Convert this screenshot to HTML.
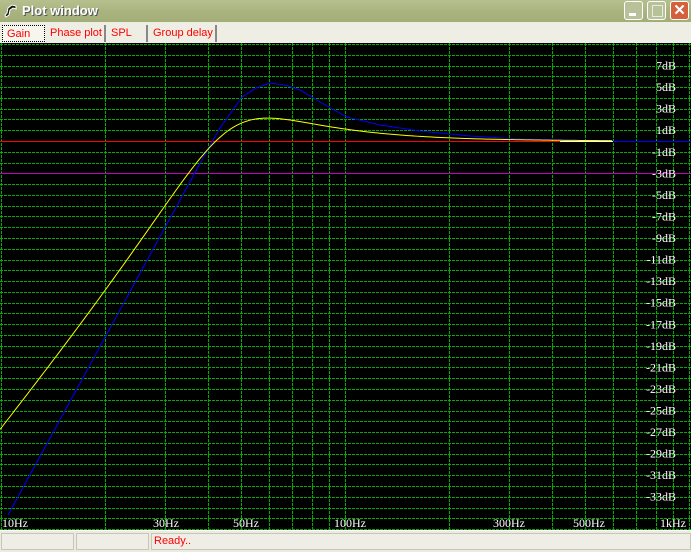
<!DOCTYPE html>
<html><head><meta charset="utf-8"><style>
body{margin:0;width:691px;height:551px;overflow:hidden;background:#ecebe0;font-family:"Liberation Sans",sans-serif;position:relative}
#title{position:absolute;left:0;top:0;width:691px;height:22px;background:linear-gradient(#b6c08e,#a9b47f 50%,#a2ad78)}
#title span{position:absolute;left:22px;top:3px;color:#fff;font-weight:bold;font-size:13px;text-shadow:1px 1px 0 #555}
.btn{position:absolute;top:1px;width:19px;height:19px;border:1px solid #fff;border-radius:3px;box-sizing:border-box}
#tabs{position:absolute;top:22px;left:0;width:691px;height:21px;background:#efeee4}
.tab{position:absolute;top:3px;height:17px;color:#f00;font-size:11px;line-height:16px;padding-left:4px;border-right:2px solid #888;box-sizing:border-box}
#plot{position:absolute;top:43px;left:0}
#status{position:absolute;top:530px;left:0;width:691px;height:21px;background:#ecebe0;border-top:1px solid #fff}
.sp{position:absolute;top:2px;height:17px;border:1px solid #c8c6b8;box-sizing:border-box;background:#efeee6}
</style></head><body>
<div id="title"><svg width="16" height="16" style="position:absolute;left:3px;top:3px" viewBox="0 0 16 16"><path d="M3 14 L6 12 L7 7 L10 5 L13 6 L13 3 L9 2 L5 5 L4 10 L2 12Z" fill="#111" stroke="#fff" stroke-width="1"/></svg><span>Plot window</span>
<div class="btn" style="left:624px;background:#b8c29a"><div style="position:absolute;left:4px;top:11px;width:7px;height:3px;background:#fff"></div></div>
<div class="btn" style="left:647px;background:#b8c29a"><div style="position:absolute;left:4px;top:3px;width:9px;height:10px;border:1px solid #e8ecd8"></div></div>
<div class="btn" style="left:670px;background:#d4603c;color:#fff;font-size:15px;font-weight:bold;text-align:center;line-height:17px">✕</div>
</div>
<div id="tabs">
<div class="tab" style="left:2px;width:43px;border:1px dotted #000;background:#f6f5ee">Gain</div>
<div class="tab" style="left:46px;width:60px">Phase plot</div>
<div class="tab" style="left:107px;width:41px">SPL</div>
<div class="tab" style="left:149px;width:68px">Group delay</div>
</div>
<svg id="plot" width="691" height="487" viewBox="0 43 691 487" xmlns="http://www.w3.org/2000/svg"><rect x="0" y="43" width="691" height="487" fill="#000"/><g id="g"></g></svg>
<div id="status"><div class="sp" style="left:1px;width:73px"></div><div class="sp" style="left:76px;width:73px"></div><div class="sp" style="left:151px;width:540px;color:#f00;font-size:11px;line-height:15px;padding-left:2px">Ready..</div></div>
<script>
var NS='http://www.w3.org/2000/svg',g=document.getElementById('g');
function el(n,a,t){var e=document.createElementNS(NS,n);for(var k in a)e.setAttribute(k,a[k]);if(t)e.textContent=t;g.appendChild(e);}
function X(f){return 1+344*Math.log10(f/10);}
function Y(d){return 141-10.78*d;}
var fs=[];for(var d=10;d<=1000;d*=10)for(var k=1;k<10;k++){var f=d*k;if(f<=1000)fs.push(f);}
fs.forEach(function(f){var x=Math.round(X(f))+0.5;el('line',{x1:x,y1:43,x2:x,y2:530,stroke:'#00b000','stroke-dasharray':'3,1','shape-rendering':'crispEdges'});});
for(var db=9;db>=-36;db--){if(db==0||db==-3)continue;var y=Math.round(Y(db))+0.5;el('line',{x1:0,y1:y,x2:691,y2:y,stroke:'#00b000','stroke-dasharray':'3,1','shape-rendering':'crispEdges'});}
el('line',{x1:0,y1:173.5,x2:691,y2:173.5,stroke:'#c000c0','shape-rendering':'crispEdges'});
el('line',{x1:0,y1:141.5,x2:613,y2:141.5,stroke:'#ff0000','shape-rendering':'crispEdges'});
el('line',{x1:613,y1:141.5,x2:691,y2:141.5,stroke:'#0000ff','shape-rendering':'crispEdges'});
for(var db=7;db>=-33;db-=2){el('text',{x:676,y:Y(db)+4,'text-anchor':'end',fill:'#fff','font-family':'Liberation Serif','font-size':12},db+'dB');}
[['10Hz',2],['30Hz',153],['50Hz',233],['100Hz',334],['300Hz',493],['500Hz',573],['1kHz',660]].forEach(function(a){el('text',{x:a[1],y:527,fill:'#fff','font-family':'Liberation Serif','font-size':12},a[0]);});
var bp=[[8,515],[180,200],[203,158],[220,128],[242,97],[256,88],[270,83],[285,85],[300,90],[320,102],[347,117],[380,125],[420,131],[470,136],[520,139],[613,141]];
var yp=[];for(var x=0;x<=613;x+=3){var f=10*Math.pow(10,(x-1)/344),r=f/47,Q=1.15;var h=r*r/Math.sqrt(Math.pow(1-r*r,2)+Math.pow(r/Q,2));yp.push([x,Y(20*Math.log10(h))]);}
el('polyline',{fill:'none',stroke:'#0000ff',points:bp.join(' ')});
el('polyline',{fill:'none',stroke:'#ffff00',points:yp.join(' ')});
el('line',{x1:560,y1:141.5,x2:613,y2:141.5,stroke:'#fff'});
</script>
</body></html>
